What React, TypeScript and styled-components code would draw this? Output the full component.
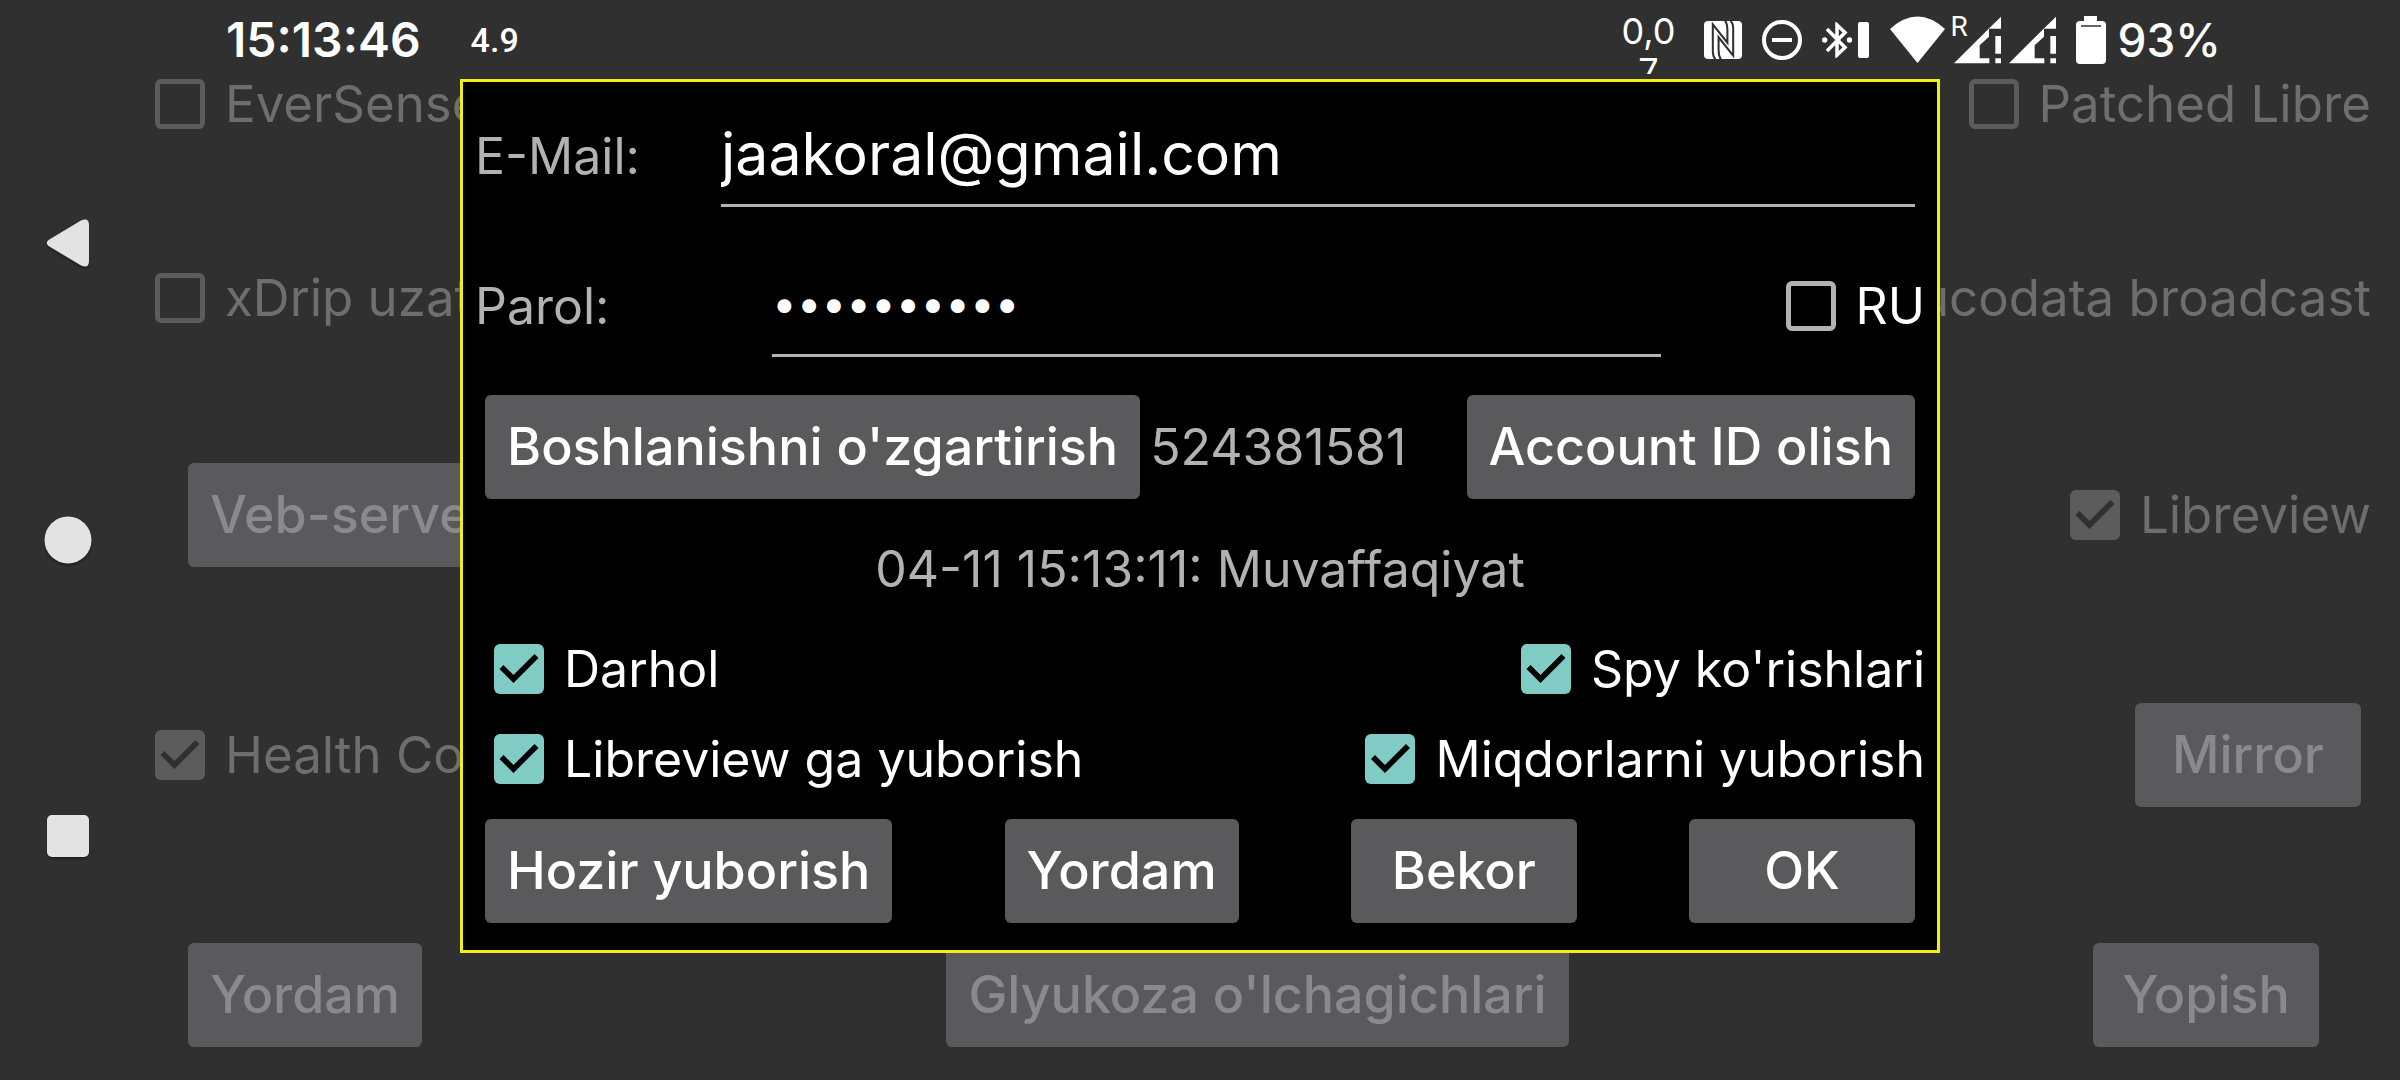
import React from "react";
import styled, { createGlobalStyle } from "styled-components";

const GlobalStyle = createGlobalStyle`
  *, *::before, *::after { box-sizing: border-box; }
  html, body { margin: 0; background: #303030; }
  body, button, input {
    font-family: Inter, Roboto, "Liberation Sans", sans-serif;
    font-size: 50px;
    line-height: 60px;
  }
`;

const Screen = styled.div`
  position: relative;
  display: flex;
  min-height: 100vh;
  overflow: hidden;
  background: #303030;
  color: #fff;
`;

const NavBar = styled.nav`
  display: flex;
  flex-direction: column;
  align-items: center;
  justify-content: space-between;
  flex: none;
  width: 136px;
  padding: 219px 0;
`;

const NavButton = styled.button`
  display: block;
  width: 48px;
  height: 48px;
  padding: 0;
  border: 0;
  background: none;
  svg { display: block; filter: drop-shadow(0 2px 1px rgba(0, 0, 0, 0.35)); }
`;

const Settings = styled.main`
  flex: 1;
  min-width: 0;
  padding-top: 52px;
`;

const SettingsRow = styled.div<{ $before?: number; $left?: number; $right?: number }>`
  display: flex;
  align-items: center;
  justify-content: space-between;
  height: 104px;
  margin-top: ${(p) => p.$before ?? 0}px;
  padding-left: ${(p) => p.$left ?? 19}px;
  padding-right: ${(p) => p.$right ?? 29}px;
`;

const CheckLabel = styled.label<{ $muted?: boolean }>`
  display: flex;
  align-items: center;
  gap: 20px;
  white-space: nowrap;
  font-size: ${(p) => (p.$muted ? 51 : 50)}px;
  color: ${(p) => (p.$muted ? "#6e6e6e" : "#fff")};
`;

const CheckBox = styled.input.attrs({ type: "checkbox" })<{ $muted?: boolean }>`
  appearance: none;
  flex: none;
  width: 50px;
  height: 50px;
  margin: 0;
  border: 5px solid ${(p) => (p.$muted ? "#5c5c5c" : "#b2b2b2")};
  border-radius: 6px;
  &:checked {
    border: 0;
    background: ${(p) => (p.$muted ? "#5c5c5c" : "#80cbc4")};
  }
  &:checked::before {
    content: "";
    display: block;
    width: 50px;
    height: 50px;
    background: ${(p) => (p.$muted ? "#303030" : "#000")};
    clip-path: polygon(39% 78%, 11% 50%, 19% 42%, 39% 62%, 81% 20%, 89% 28%);
  }
`;

const Button = styled.button<{ $muted?: boolean }>`
  flex: none;
  min-width: 226px;
  height: 104px;
  padding: 0 22px;
  border: 0;
  border-radius: 6px;
  background: #5a5a5c;
  color: ${(p) => (p.$muted ? "#8a8a8c" : "#fff")};
  font-size: 52px;
  font-weight: 500;
  white-space: nowrap;
`;

const StatusBar = styled.header`
  position: absolute;
  inset: 0 0 auto 0;
  display: flex;
  align-items: center;
  justify-content: space-between;
  height: 79px;
  padding: 0 179px 0 226px;
`;

const StatusGroup = styled.div<{ $gap: number }>`
  display: flex;
  align-items: center;
  gap: ${(p) => p.$gap}px;
  svg { display: block; flex: none; }
`;

const Clock = styled.span`
  font-size: 48px;
  font-weight: 600;
`;

const Reading = styled.span`
  font-family: Roboto, "Liberation Sans", sans-serif;
  font-size: 34px;
  font-weight: 500;
`;

const Speed = styled.span`
  height: 69px;
  padding-top: 6px;
  margin-right: 8px;
  overflow: hidden;
  font-size: 36px;
  line-height: 40px;
  text-align: center;
`;

const Percent = styled.span`
  font-size: 46px;
  font-weight: 500;
`;

const SignalBox = styled.span`
  position: relative;
`;

const Roaming = styled.span`
  position: absolute;
  left: -3px;
  top: -3px;
  font-family: Roboto, "Liberation Sans", sans-serif;
  font-size: 28px;
  line-height: 28px;
`;

const Overlay = styled.div`
  position: absolute;
  inset: 79px 0 auto 0;
  display: flex;
  justify-content: center;
`;

const Dialog = styled.form`
  width: min(1480px, 100%);
  padding: 0 12px 27px;
  border: 3px solid #f0ee14;
  background: #000;
`;

const FieldRow = styled.div<{ $before?: number }>`
  display: flex;
  align-items: flex-end;
  margin-top: ${(p) => p.$before ?? 0}px;
`;

const FieldLabel = styled.label<{ $width: number }>`
  flex: none;
  width: ${(p) => p.$width}px;
  padding-bottom: 21px;
  color: #b2b2b2;
`;

const Field = styled.input<{ $after: number }>`
  flex: 1;
  min-width: 0;
  height: 125px;
  margin: 0 ${(p) => p.$after}px 0 0;
  padding: 35px 0 15px;
  border: 0;
  border-bottom: 3px solid #b2b2b2;
  border-radius: 0;
  outline: 0;
  background: none;
  color: #fff;
  font-size: 59px;
  line-height: 72px;
  &[type="password"] { font-size: 44px; }
`;

const FieldSide = styled.div`
  padding-bottom: 21px;
`;

const ActionRow = styled.div<{ $before: number }>`
  display: flex;
  align-items: center;
  justify-content: space-between;
  margin: ${(p) => p.$before}px 10px 0;
`;

const Account = styled.div`
  display: flex;
  align-items: center;
  gap: 10px;
`;

const Note = styled.span`
  color: #b2b2b2;
`;

const Result = styled.p`
  margin: 40px 0;
  color: #b2b2b2;
  text-align: center;
`;

const Options = styled.div`
  display: grid;
  grid-template-columns: auto auto;
  justify-content: space-between;
  row-gap: 30px;
  padding-left: 19px;
  & > :nth-child(even) { justify-self: end; }
`;

function Check(props: { text: string; checked?: boolean; muted?: boolean }) {
  return (
    <CheckLabel $muted={props.muted}>
      <CheckBox $muted={props.muted} defaultChecked={props.checked} disabled={props.muted} />
      {props.text}
    </CheckLabel>
  );
}

function Signal({ roaming }: { roaming?: boolean }) {
  return (
    <SignalBox>
      <svg width="47" height="48" viewBox="0 0 141 144" fill="#fff">
        <path d="M141 2V38H104z" />
        <path d="M0 142L104 38H105V62L77 88V127H106V142z" />
        <path d="M124 60H141V113H124zM124 127H141V142H124z" />
      </svg>
      {roaming && <Roaming>R</Roaming>}
    </SignalBox>
  );
}

export default function App() {
  return (
    <Screen>
      <GlobalStyle />
      <NavBar>
        <NavButton aria-label="Back">
          <svg width="48" height="48" viewBox="0 0 48 48" fill="#e3e3e3">
            <path d="M4.500 21 L37 1.500 Q45 -2 45 6 V42 Q45 50 37 46.500 L4.500 27 Q1 24 4.500 21z" />
          </svg>
        </NavButton>
        <NavButton aria-label="Home">
          <svg width="48" height="48" viewBox="0 0 48 48" fill="#e3e3e3">
            <circle cx="24" cy="24" r="23.500" />
          </svg>
        </NavButton>
        <NavButton aria-label="Recent">
          <svg width="48" height="48" viewBox="0 0 48 48" fill="#e3e3e3">
            <rect x="3" y="2" width="42" height="42" rx="5" />
          </svg>
        </NavButton>
      </NavBar>

      <Settings>
        <SettingsRow>
          <Check text="EverSense" muted />
          <Check text="Patched Libre" muted />
        </SettingsRow>
        <SettingsRow $before={90}>
          <Check text="xDrip uzatish" muted />
          <Check text="Glucodata broadcast" muted />
        </SettingsRow>
        <SettingsRow $before={113} $left={52}>
          <Button $muted>Veb-server</Button>
          <Check text="Libreview" checked muted />
        </SettingsRow>
        <SettingsRow $before={136} $right={39}>
          <Check text="Health Connect" checked muted />
          <Button $muted>Mirror</Button>
        </SettingsRow>
        <SettingsRow $before={136} $left={52} $right={81}>
          <Button $muted>Yordam</Button>
          <Button $muted>Glyukoza o'lchagichlari</Button>
          <Button $muted>Yopish</Button>
        </SettingsRow>
      </Settings>

      <StatusBar>
        <StatusGroup $gap={50}>
          <Clock>15:13:46</Clock>
          <Reading>4.9</Reading>
        </StatusGroup>
        <StatusGroup $gap={20}>
          <Speed>
            0,0
            <br />7
          </Speed>
          <svg width="38" height="38" viewBox="0 0 112 112" fill="none">
            <rect width="112" height="112" rx="12" fill="#fff" />
            <g stroke="#303030" strokeWidth="6">
              <path d="M34 112Q26 106 26 88V10L69 64V26Q69 8 62 -2" />
              <path d="M78 0Q86 6 86 24V102L43 48V86Q43 104 50 114" />
            </g>
          </svg>
          <svg width="40" height="40" viewBox="0 0 40 40" fill="none" stroke="#fff" strokeWidth="4">
            <circle cx="20" cy="20" r="18" />
            <path d="M10 20H30" />
          </svg>
          <svg width="48" height="36" viewBox="0 0 48 36" fill="none">
            <path d="M5 7L23 25.500L15 33V3L23 10.500L5 29" stroke="#fff" strokeWidth="3.500" />
            <circle cx="2.700" cy="18" r="2.700" fill="#fff" />
            <circle cx="27.500" cy="18" r="2.700" fill="#fff" />
            <rect x="36" width="11" height="36" rx="2" fill="#fff" />
          </svg>
          <StatusGroup $gap={8}>
            <svg width="56" height="48" viewBox="0 0 56 48" fill="#fff">
              <path d="M0 13 Q27.500 -12 55 13 L27.500 47z" />
            </svg>
            <Signal roaming />
            <Signal />
          </StatusGroup>
          <StatusGroup $gap={12}>
            <svg width="30" height="48" viewBox="0 0 30 48" fill="#fff">
              <path d="M8 0H21V5H26Q30 5 30 9V44Q30 48 26 48H4Q0 48 0 44V9Q0 5 4 5H8z" />
              <path d="M5 10H25" stroke="#303030" strokeWidth="1.500" />
            </svg>
            <Percent>93%</Percent>
          </StatusGroup>
        </StatusGroup>
      </StatusBar>

      <Overlay>
        <Dialog>
          <FieldRow>
            <FieldLabel htmlFor="email" $width={246}>E-Mail:</FieldLabel>
            <Field id="email" type="text" defaultValue="jaakoral@gmail.com" $after={10} />
          </FieldRow>
          <FieldRow $before={25}>
            <FieldLabel htmlFor="password" $width={297}>Parol:</FieldLabel>
            <Field id="password" type="password" defaultValue="0123456789" $after={125} />
            <FieldSide>
              <Check text="RU" />
            </FieldSide>
          </FieldRow>
          <ActionRow $before={38}>
            <Account>
              <Button type="button">Boshlanishni o'zgartirish</Button>
              <Note>524381581</Note>
            </Account>
            <Button type="button">Account ID olish</Button>
          </ActionRow>
          <Result>04-11 15:13:11: Muvaffaqiyat</Result>
          <Options>
            <Check text="Darhol" checked />
            <Check text="Spy ko'rishlari" checked />
            <Check text="Libreview ga yuborish" checked />
            <Check text="Miqdorlarni yuborish" checked />
          </Options>
          <ActionRow $before={30}>
            <Button type="button">Hozir yuborish</Button>
            <Button type="button">Yordam</Button>
            <Button type="button">Bekor</Button>
            <Button type="button">OK</Button>
          </ActionRow>
        </Dialog>
      </Overlay>
    </Screen>
  );
}
